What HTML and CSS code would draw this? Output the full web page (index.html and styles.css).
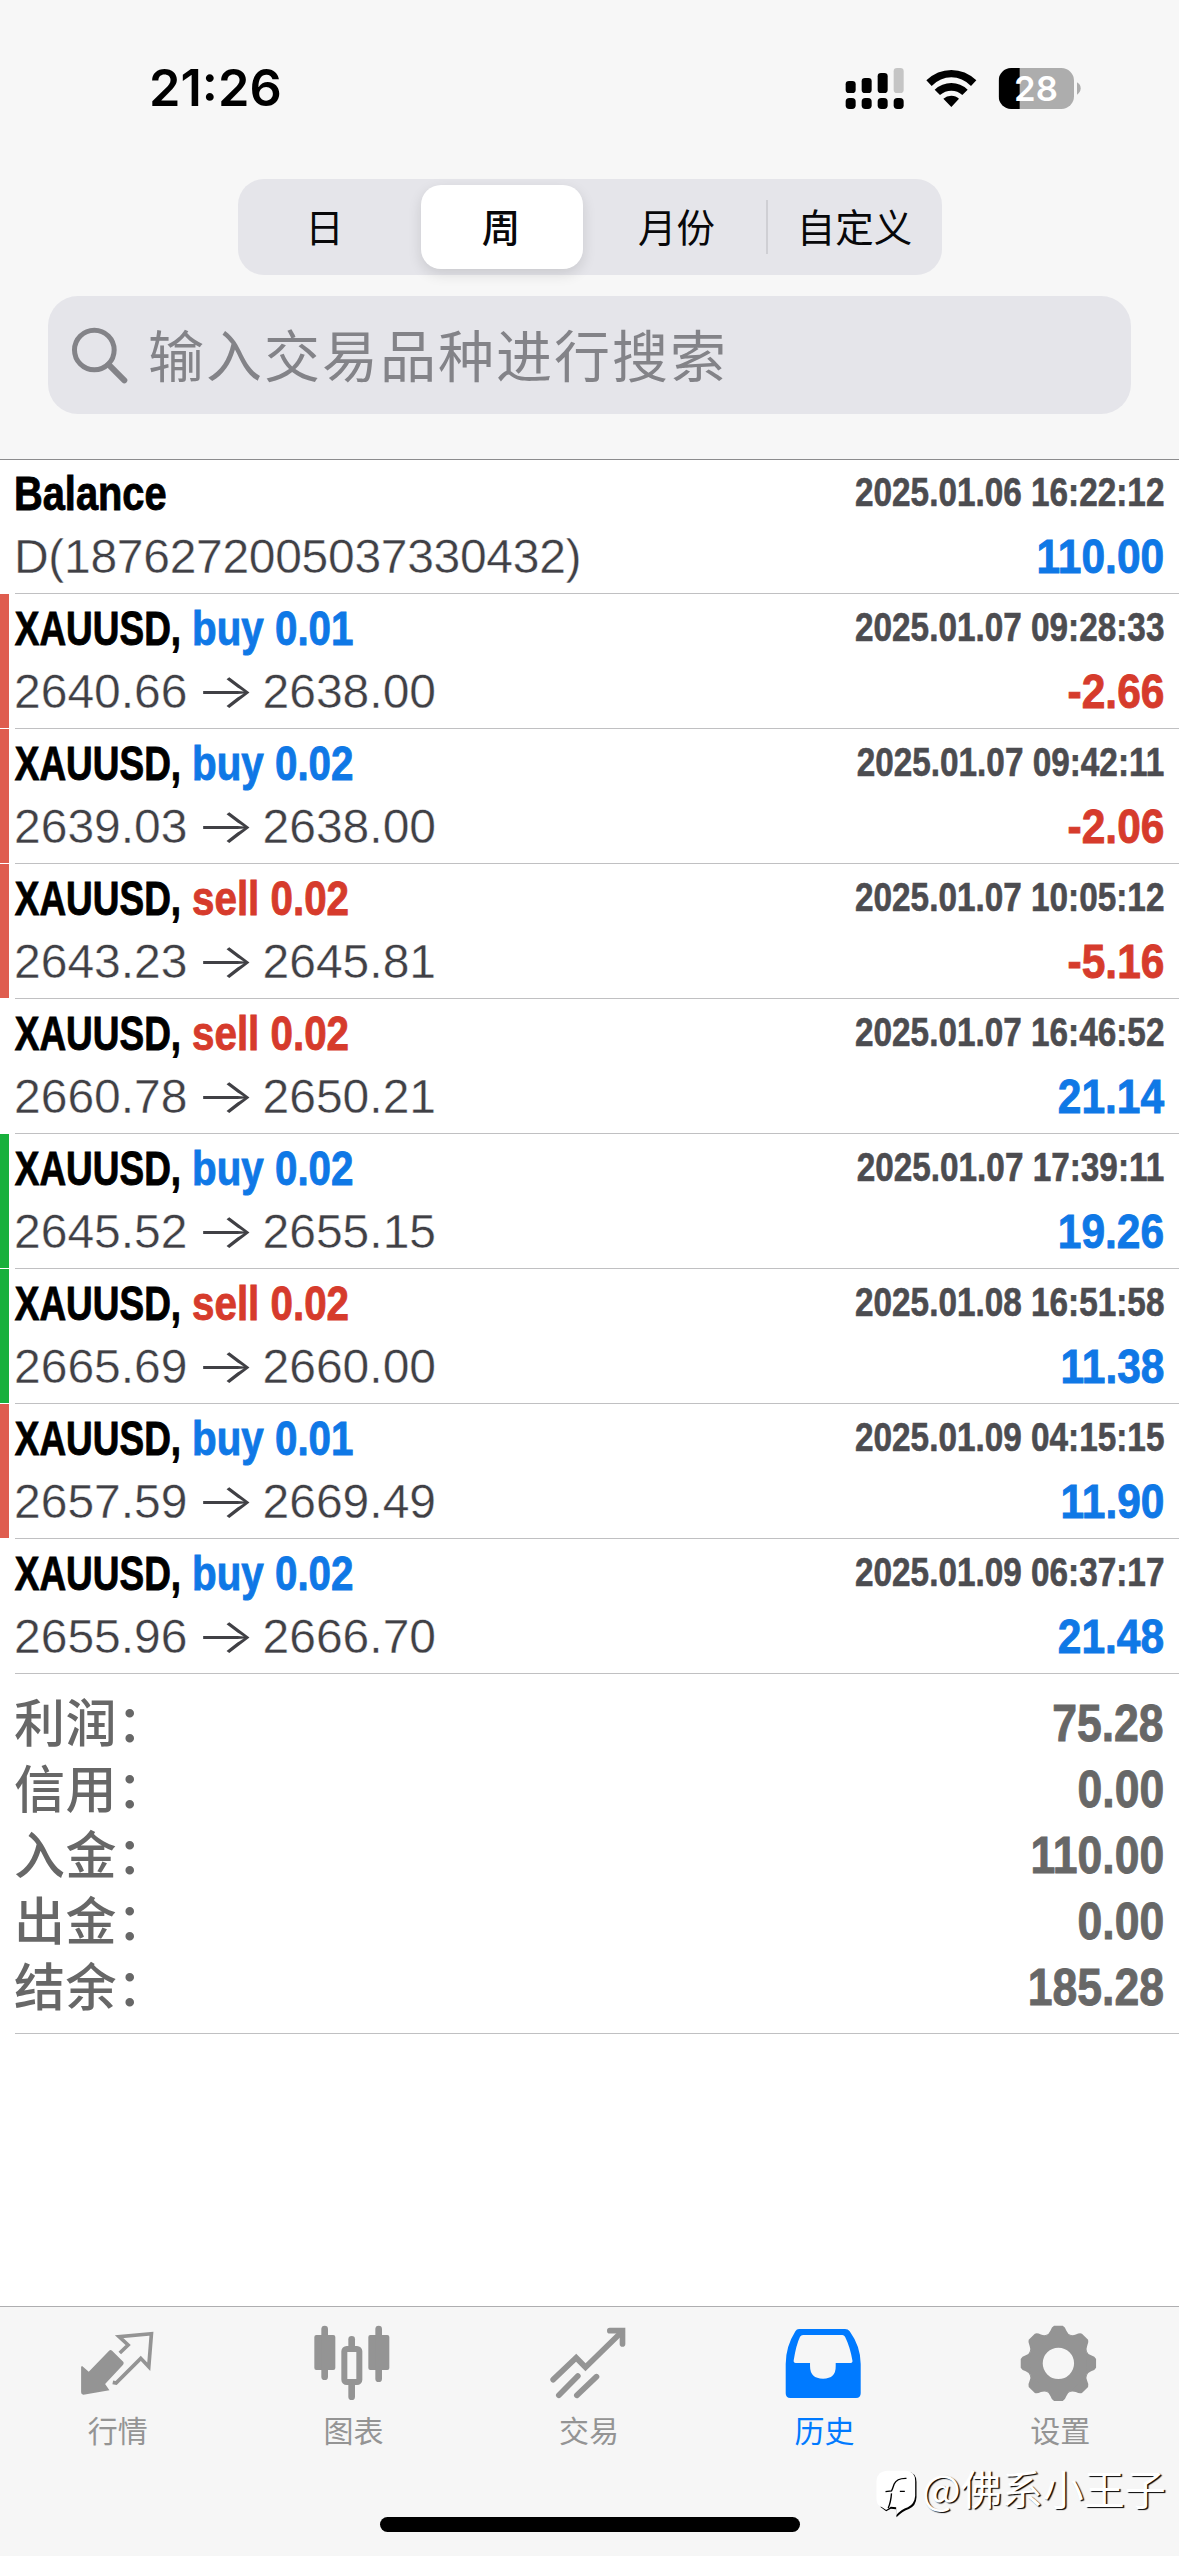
FILE: index.html
```
<!DOCTYPE html>
<html lang="zh-CN">
<head>
<meta charset="utf-8">
<title>历史</title>
<link rel="stylesheet" href="styles.css">
</head>
<body>
<div class="app">
  <header class="header">
    <div class="status">
      <span class="clock">21:26</span>
      <svg class="status-icons" viewBox="130 75 720 135">
        <g fill="#000">
          <rect x="138" y="120" width="30" height="36" rx="10"/><rect x="186" y="111" width="30" height="45" rx="10"/><rect x="234" y="96" width="30" height="60" rx="10"/>
          <rect x="138" y="171" width="30" height="33" rx="11"/><rect x="186" y="171" width="30" height="33" rx="11"/><rect x="234" y="171" width="30" height="33" rx="11"/><rect x="282" y="171" width="30" height="33" rx="11"/>
        </g>
        <rect x="282" y="81" width="30" height="75" rx="10" fill="#c5c5c5"/>
        <path d="M380 118Q413 87 455 87T530 118L514 135Q488 109 455 109T396 135ZM405 146Q427 126 455 126T504 146L488 162Q474 149 455 149T421 162ZM431 173Q441 164 455 164T478 173L455 198Z"/>
        <clipPath id="cell"><rect x="597" y="81" width="226" height="123" rx="38"/></clipPath>
        <g clip-path="url(#cell)"><rect x="597" y="81" width="226" height="123" fill="#adadad"/><rect x="597" y="81" width="63" height="123"/></g>
        <path d="M832 124Q843 130 843 142T832 161Z" fill="#adadad"/>
        <text class="charge" x="709" y="180">28</text>
      </svg>
    </div>
    <div class="segments">
      <span class="segment">日</span>
      <span class="segment segment-on">周</span>
      <span class="segment">月份</span>
      <span class="segment segment-split">自定义</span>
    </div>
    <div class="search">
      <svg class="lens" viewBox="120 105 174 174"><g fill="none" stroke="#838388"><circle cx="193" cy="177" r="59.5" stroke-width="15"/><path d="M236 221L283 268" stroke-width="18" stroke-linecap="round"/></g></svg>
      <span class="hint">输入交易品种进行搜索</span>
    </div>
  </header>

  <main class="list">
    <section class="row">
      <div class="line head"><b class="cond name">Balance</b><b class="cond date">2025.01.06 16:22:12</b></div>
      <div class="line"><span class="price comment">D(1876272005037330432)</span><b class="cond sum up">110.00</b></div>
    </section>
    <section class="row loss">
      <div class="line head"><b class="cond symbol">XAUUSD,</b><b class="cond side up">buy 0.01</b><b class="cond date">2025.01.07 09:28:33</b></div>
      <div class="line"><span class="price">2640.66<i class="arrow">→</i>2638.00</span><b class="cond sum down">-2.66</b></div>
    </section>
    <section class="row loss">
      <div class="line head"><b class="cond symbol">XAUUSD,</b><b class="cond side up">buy 0.02</b><b class="cond date">2025.01.07 09:42:11</b></div>
      <div class="line"><span class="price">2639.03<i class="arrow">→</i>2638.00</span><b class="cond sum down">-2.06</b></div>
    </section>
    <section class="row loss">
      <div class="line head"><b class="cond symbol">XAUUSD,</b><b class="cond side down">sell 0.02</b><b class="cond date">2025.01.07 10:05:12</b></div>
      <div class="line"><span class="price">2643.23<i class="arrow">→</i>2645.81</span><b class="cond sum down">-5.16</b></div>
    </section>
    <section class="row">
      <div class="line head"><b class="cond symbol">XAUUSD,</b><b class="cond side down">sell 0.02</b><b class="cond date">2025.01.07 16:46:52</b></div>
      <div class="line"><span class="price">2660.78<i class="arrow">→</i>2650.21</span><b class="cond sum up">21.14</b></div>
    </section>
    <section class="row gain">
      <div class="line head"><b class="cond symbol">XAUUSD,</b><b class="cond side up">buy 0.02</b><b class="cond date">2025.01.07 17:39:11</b></div>
      <div class="line"><span class="price">2645.52<i class="arrow">→</i>2655.15</span><b class="cond sum up">19.26</b></div>
    </section>
    <section class="row gain">
      <div class="line head"><b class="cond symbol">XAUUSD,</b><b class="cond side down">sell 0.02</b><b class="cond date">2025.01.08 16:51:58</b></div>
      <div class="line"><span class="price">2665.69<i class="arrow">→</i>2660.00</span><b class="cond sum up">11.38</b></div>
    </section>
    <section class="row loss">
      <div class="line head"><b class="cond symbol">XAUUSD,</b><b class="cond side up">buy 0.01</b><b class="cond date">2025.01.09 04:15:15</b></div>
      <div class="line"><span class="price">2657.59<i class="arrow">→</i>2669.49</span><b class="cond sum up">11.90</b></div>
    </section>
    <section class="row">
      <div class="line head"><b class="cond symbol">XAUUSD,</b><b class="cond side up">buy 0.02</b><b class="cond date">2025.01.09 06:37:17</b></div>
      <div class="line"><span class="price">2655.96<i class="arrow">→</i>2666.70</span><b class="cond sum up">21.48</b></div>
    </section>
    <section class="totals">
      <div class="total"><span class="label">利润：</span><b class="cond sum">75.28</b></div>
      <div class="total"><span class="label">信用：</span><b class="cond sum">0.00</b></div>
      <div class="total"><span class="label">入金：</span><b class="cond sum">110.00</b></div>
      <div class="total"><span class="label">出金：</span><b class="cond sum">0.00</b></div>
      <div class="total"><span class="label">结余：</span><b class="cond sum">185.28</b></div>
    </section>
  </main>

  <footer class="footer">
    <nav class="tabs">
      <div class="tab">
        <svg viewBox="53.7 45 240 228">
          <path d="M66 168L86 185L147 122Q151 118 156 122L190 156Q192 160 189 164L135 222L148 241L70 254Q63 254 63 247V170Z" fill="currentColor"/>
          <path d="M179 129L204 105L177 80L274 71L266 170L242 145L168 219L158 217" fill="none" stroke="currentColor" stroke-width="11"/>
        </svg>行情
      </div>
      <div class="tab">
        <svg viewBox="761 45 240 228">
          <g fill="currentColor"><rect x="765" y="75" width="63" height="105" rx="6"/><rect x="927" y="75" width="63" height="105" rx="6"/><rect x="786" y="47" width="20" height="163" rx="10"/><rect x="948" y="47" width="20" height="169" rx="10"/><rect x="867" y="78" width="20" height="40" rx="10"/><rect x="867" y="215" width="20" height="55" rx="10"/></g>
          <rect x="855" y="117" width="45" height="99" rx="7" fill="none" stroke="currentColor" stroke-width="18"/>
        </svg>图表
      </div>
      <div class="tab">
        <svg viewBox="58.5 45 240 228">
          <g fill="none" stroke="currentColor" stroke-width="17" stroke-linecap="round"><path d="M71 209L140 143L168 172L274 68"/><path d="M241 62H279V102"/><path d="M88 256L145 198M142 256L201 200" /></g>
        </svg>交易
      </div>
      <div class="tab tab-on">
        <svg viewBox="765.9 45 240 228">
          <path fill="currentColor" fill-rule="evenodd" d="M808 57H946Q955 57 960 64Q993 110 993 162V250Q993 264 979 264H782Q768 264 768 250V162Q768 110 797 64Q801 57 808 57ZM820 75Q814 75 811 80Q799 105 792 151Q791 159 798 159H841V168Q841 206 880 206T918 168V159H963Q970 158 968 151Q961 110 946 80Q943 75 938 75Z"/>
        </svg>历史
      </div>
      <div class="tab">
        <svg viewBox="483.3 45 240 228">
          <g fill="currentColor" transform="translate(598.5 160)">
            <path fill-rule="evenodd" d="M0-91A91 91 0 1 0 0 91A91 91 0 1 0 0-91ZM0-47A47 47 0 1 1 0 47A47 47 0 1 1 0-47Z"/>
            <g id="teeth"><path id="tooth" d="M-38-84Q-28-88-24-98Q-20-110-13-113H13Q20-110 24-98Q28-88 38-84Z"/><use href="#tooth" transform="rotate(90)"/><use href="#tooth" transform="rotate(180)"/><use href="#tooth" transform="rotate(270)"/></g>
            <use href="#teeth" transform="rotate(45)"/>
          </g>
        </svg>设置
      </div>
    </nav>
    <div class="home"></div>
    <div class="credit">
      <svg viewBox="45 475 125 150">
        <path fill="#000" d="M82 484H143Q169 486 169 514V560Q168 586 146 595Q128 600 109 620L108 596L92 594L78 602L60 588L74 586L60 520Z"/>
        <path fill="#fff" d="M80 480H138Q165 482 165 510V556Q163 580 143 590Q123 596 108 614V590L92 588L78 598L54 582Q48 575 49 556V510Q51 482 80 480Z"/>
        <path fill="none" stroke="#000" stroke-width="4" d="M139 503Q110 502 102 520Q97 535 94 541L76 543M94 548Q92 575 84 592M119 542H134"/>
      </svg>
      <span>@佛系小王子</span>
    </div>
  </footer>
</div>
</body>
</html>
```
FILE: styles.css
```
* { box-sizing: border-box; }
body { margin: 0; background: #fff; font-family: "Noto Sans CJK SC", sans-serif; }
i { font-style: normal; }
.app { display: flex; flex-direction: column; width: 1179px; height: 2556px; overflow: hidden; }

.header { display: flex; flex-direction: column; height: 460px; background: #f7f7f7; border-bottom: 1px solid #8c8c8e; }
.status { display: flex; justify-content: space-between; align-items: center; height: 179px; padding: 0 96px 3px 149px; }
.clock { font: 600 50.5px/60px Inter, sans-serif; }
.status-icons { width: 240px; height: 45px; }
.charge { font: 600 104px Inter, sans-serif; fill: #fff; text-anchor: middle; }

.segments { display: grid; grid-template-columns: repeat(4, 176px); width: 704px; height: 96px; margin: 0 auto 21px; background: #e5e5ea; border-radius: 26px; font-size: 38.5px; line-height: 80px; text-align: center; color: #08080a; }
.segment { height: 96px; padding: 6px 2px 0 0; }
.segment-on { height: 84px; margin: 6px 7px; padding: 0 1px 0 0; border-radius: 20px; background: #fff; font-weight: 500; box-shadow: 0 5px 14px rgba(0, 0, 0, .12); }
.segment-split { height: 54px; margin-top: 21px; padding: 0; line-height: 50px; border-left: 2px solid #cfcfd4; }

.search { display: flex; align-items: center; gap: 20px; height: 118px; margin: 0 48px; padding-left: 22px; border-radius: 30px; background: #e5e5ea; }
.lens { width: 58px; height: 58px; }
.hint { padding-bottom: 5px; color: #838388; font-size: 56px; line-height: 80px; letter-spacing: 2px; }

.row { height: 135px; padding: 2px 15px 0 14px; background: linear-gradient(#c0c0c2, #c0c0c2) 15px 100% / 100% 1px no-repeat; }
.row:first-child { height: 134px; padding-top: 1px; }
.loss { background: linear-gradient(#c0c0c2, #c0c0c2) 15px 100% / 100% 1px no-repeat, linear-gradient(#df5d4f, #df5d4f) 0 0 / 9px 134px no-repeat; }
.gain { background: linear-gradient(#c0c0c2, #c0c0c2) 15px 100% / 100% 1px no-repeat, linear-gradient(#18b03c, #18b03c) 0 0 / 9px 134px no-repeat; }
.line { display: flex; height: 63px; font: 48px/63px "Liberation Sans", sans-serif; }
.head { height: 64px; line-height: 64px; }
.cond { display: block; font-family: "Liberation Sans", sans-serif; font-weight: 700; white-space: nowrap; transform-origin: 0 50%; -webkit-text-stroke: .9px currentColor; }
.name, .symbol, .side { font-size: 48.5px; }
.name { transform: scaleX(.82); }
.symbol { width: 178px; padding-left: 1px; transform: scaleX(.762); }
.side { transform: scaleX(.832); }
.date { margin-left: auto; font-size: 40px; line-height: 63px; color: #4c4c50; transform: scaleX(.833); transform-origin: 100% 50%; -webkit-text-stroke-width: .6px; }
.sum { margin-left: auto; transform: scaleX(.885); transform-origin: 100% 50%; }
.up { color: #0f78e6; }
.down { color: #d63b2c; }
.price { color: #404045; -webkit-text-stroke: .4px #fff; white-space: nowrap; }
.comment { letter-spacing: -.3px; }
.arrow { display: inline-block; width: 75px; text-align: center; font-family: Inter, sans-serif; font-weight: 300; line-height: 50px; transform: scaleX(1.32); -webkit-text-stroke: 0; }

.totals { height: 360px; padding: 16px 15px 0 14px; color: #676767; background: linear-gradient(#c0c0c2, #c0c0c2) 15px 100% / 100% 1px no-repeat; }
.total { display: flex; height: 66px; font-size: 51px; line-height: 67px; }
.total .sum { transform: scaleX(.873); }
.label { font-weight: 500; line-height: 60px; letter-spacing: .5px; }

.footer { position: relative; display: flex; flex-direction: column; align-items: center; height: 250px; margin-top: auto; border-top: 1px solid #aeaeb0; background: #f6f6f6; }
.tabs { display: grid; grid-template-columns: repeat(5, 1fr); width: 100%; height: 210px; padding: 18px 1px 0 0; color: #949494; }
.tab { display: flex; flex-direction: column; align-items: center; gap: 6px; font-size: 30px; line-height: 44px; }
.tab svg { width: 80px; height: 76px; }
.tab-on { color: #007aff; }
.home { width: 420px; height: 15px; border-radius: 8px; background: #000; }
.credit { position: absolute; left: 875px; top: 162px; display: flex; gap: 5px; font-size: 41px; line-height: 36px; color: #fff; text-shadow: 1.5px 1px 1px #000; white-space: nowrap; }
.credit svg { width: 42px; height: 50px; }
```
